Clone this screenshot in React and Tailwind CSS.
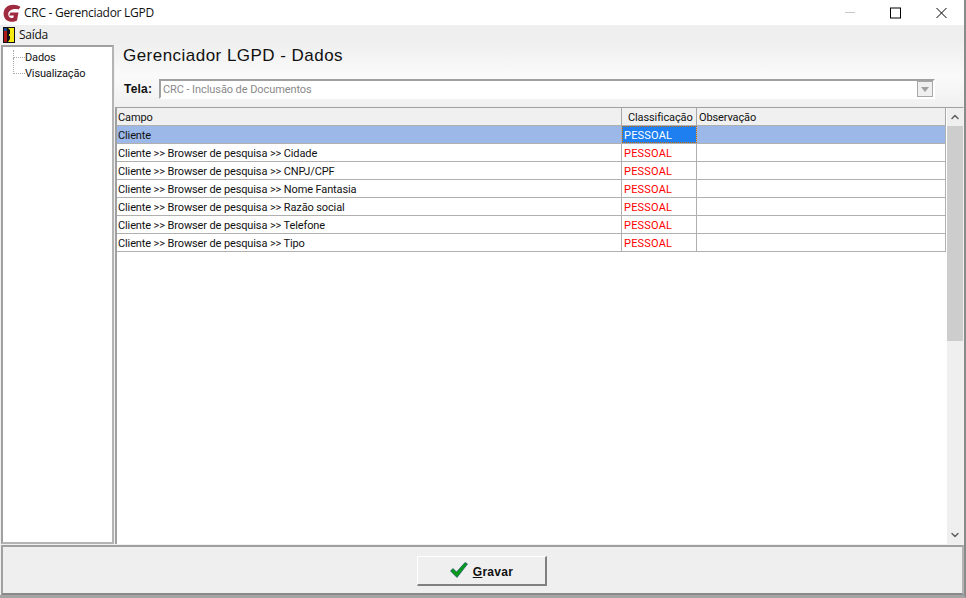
import { ChevronDown, ChevronUp } from 'lucide-react';

const rows = [
  'Cliente',
  'Cliente >> Browser de pesquisa >> Cidade',
  'Cliente >> Browser de pesquisa >> CNPJ/CPF',
  'Cliente >> Browser de pesquisa >> Nome Fantasia',
  'Cliente >> Browser de pesquisa >> Razão social',
  'Cliente >> Browser de pesquisa >> Telefone',
  'Cliente >> Browser de pesquisa >> Tipo',
];

const Logo = () => (
  <svg width="18" height="18" viewBox="0 0 18 18">
    <path d="M17.5 3 C13 0 6 0 2.5 4 C-0.5 8 0 14 4 16.5 C7.5 18.5 11.5 18 14 16.5 L15.5 8.5 L7.5 8.5 L6 11.5 L10.8 11.5 L10.3 13.8 C7.5 14.8 5 13 5.2 10 C5.5 6.5 10 4 15.5 5.5 Z" fill="#a02a40" />
  </svg>
);

const ExitIcon = () => (
  <svg width="12" height="16" viewBox="0 0 12 16">
    <rect width="12" height="16" fill="#111" />
    <rect x="1" y="1" width="3" height="3" fill="#1a4a8a" />
    <rect x="1" y="4" width="3" height="11" fill="#b01818" />
    <path d="M5 1 H11 V15 H5 L7 12 V9 H6 V7 H7 V3 Z" fill="#f6ea10" />
  </svg>
);

export default function App() {
  return (
    <div className="w-[966px] h-[598px] flex flex-col overflow-hidden bg-[#f0f0f0] border-r-2 border-r-[#8a8a8a] border-b-[3px] border-b-[#a4a4a4] font-['Roboto',sans-serif] text-[#111]">
      {/* Title bar */}
      <div className="h-[25px] shrink-0 bg-white flex items-center pl-[3px]">
        <Logo />
        <span className="ml-[3px] text-[12px] font-['Open_Sans',sans-serif] tracking-[-0.28px] text-[#111]">CRC - Gerenciador LGPD</span>
        <div className="ml-auto flex items-center">
          <svg width="119" height="12" viewBox="0 0 119 12">
            <path d="M0 5.5 H10" stroke="#c8c8c8" fill="none" />
            <rect x="45.5" y="1" width="10" height="10" stroke="#000" fill="none" />
            <path d="M91.5 1 L101.5 11 M101.5 1 L91.5 11" stroke="#000" fill="none" />
          </svg>
        </div>
      </div>

      {/* Menu */}
      <div className="h-[19px] shrink-0 flex items-center pl-[3px] bg-[#efefef]">
        <ExitIcon />
        <span className="ml-[4px] text-[12px] font-['Open_Sans',sans-serif] tracking-[-0.28px]">Saída</span>
      </div>

      <div className="flex-1 min-h-0 flex pl-px pt-px gap-px">
        {/* Tree */}
        <div className="w-[113px] shrink-0 bg-white border-2 border-[#a0a0a0] border-r-[#b4b4b4] border-b-[#b4b4b4] pt-[3px] pl-[10px] text-[11px] leading-[16px] tracking-[-0.15px]">
          <div className="flex items-center h-[16px]">
            <span className="w-[12px] h-[8px] -mt-[8px] border-l border-b border-dotted border-[#aaa]" />
            <span>Dados</span>
          </div>
          <div className="flex items-center h-[16px]">
            <span className="w-[12px] h-[16px] -mt-[16px] border-l border-b border-dotted border-[#aaa]" />
            <span>Visualização</span>
          </div>
        </div>

        {/* Content */}
        <div className="flex-1 min-w-0 flex flex-col">
          <div className="h-[62px] shrink-0 bg-gradient-to-b from-[#f0f0f0] via-[#fafafa] to-[#f0f0f0] pl-[8px]">
            <div className="h-[20px] mt-[1px] flex items-center font-['Liberation_Sans',sans-serif] text-[17px] tracking-[0.47px]">Gerenciador LGPD - Dados</div>
            <div className="mt-[13px] flex items-center">
              <span className="pl-px w-[36px] font-['Liberation_Sans',sans-serif] text-[12px] font-bold tracking-[0.2px]">Tela:</span>
              <div className="w-[776px] h-[20px] bg-white border-2 border-[#a0a0a0] border-r-white border-b-white flex items-center pl-[2px] text-[11px] text-[#8a8a8a]">
                <span className="pt-[2px] tracking-[-0.08px]">CRC - Inclusão de Documentos</span>
                <span className="ml-auto w-[16px] h-[16px] bg-[#efefef] border border-[#a8a8a8] flex items-center justify-center">
                  <span className="w-0 h-0 border-x-[4px] border-x-transparent border-t-[5px] border-t-[#a0a0a0]" />
                </span>
              </div>
            </div>
          </div>

          <div className="flex-1 min-h-0 flex bg-white border-t border-l-2 border-[#a0a0a0] border-r border-r-[#f0f0f0]">
            {/* Grid */}
            <div className="w-[829px] shrink-0 text-[11px] leading-[19px] tracking-[-0.12px]">
              <div className="flex h-[18px] bg-[#f0f0f0] border-b border-[#b0b0b0]">
                <div className="w-[505px] pl-[1px] border-r border-[#a8a8a8]">Campo</div>
                <div className="w-[75px] pl-[6px] border-r border-[#a8a8a8]">Classificação</div>
                <div className="flex-1 pl-[2px] border-r border-[#a8a8a8]">Observação</div>
              </div>
              {rows.map((row, i) => (
                <div key={row} className={`flex h-[18px] border-b border-[#b0b0b0] ${i === 0 ? 'bg-[#9cb8e8]' : 'bg-white'}`}>
                  <div className="w-[505px] pl-[1px] border-r border-[#b0b0b0]">{row}</div>
                  <div className={`w-[75px] pl-[2px] border-r border-[#b0b0b0] tracking-[0.2px] ${i === 0 ? 'bg-[#1e7ff0] text-white outline-dotted outline-1 -outline-offset-1 outline-[#c46a00]' : 'text-[#ff0000]'}`}>PESSOAL</div>
                  <div className="flex-1 border-r border-[#b0b0b0]" />
                </div>
              ))}
            </div>

            {/* Scrollbar */}
            <div className="ml-auto w-[16px] shrink-0 bg-[#efefef] flex flex-col items-center justify-between">
              <div className="w-full flex flex-col">
                <div className="h-[18px] flex items-center justify-center">
                  <ChevronUp size={12} strokeWidth={3} className="text-[#606060]" />
                </div>
                <div className="h-[215px] bg-[#cdcdcd]" />
              </div>
              <div className="h-[18px] flex items-center justify-center">
                <ChevronDown size={12} strokeWidth={3} className="text-[#606060]" />
              </div>
            </div>
          </div>
        </div>
      </div>

      {/* Footer */}
      <div className="h-[50px] shrink-0 mt-px ml-px bg-[#efefef] border-2 border-[#a0a0a0] border-r-[#b4b4b4] border-b-[#8a8a8a] flex items-center justify-center">
        <button className="w-[130px] h-[30px] mt-[2px] -ml-[1px] bg-[#efefef] border border-white border-r-2 border-b-2 border-r-[#808080] border-b-[#808080] flex items-center justify-center font-['Liberation_Sans',sans-serif] text-[12px] font-bold tracking-[0.3px]">
          <svg width="18" height="16" viewBox="0 0 18 16" className="mr-[5px] -mt-[2px]">
            <path d="M0.5 9 L3 6.5 L6.5 10 L15 0.5 L17.5 2 L7 15.5 Z" fill="#0a9a1a" stroke="#063a6a" strokeWidth="0.6" />
          </svg>
          <span className="mt-[2px]"><span className="underline">G</span>ravar</span>
        </button>
      </div>
    </div>
  );
}
